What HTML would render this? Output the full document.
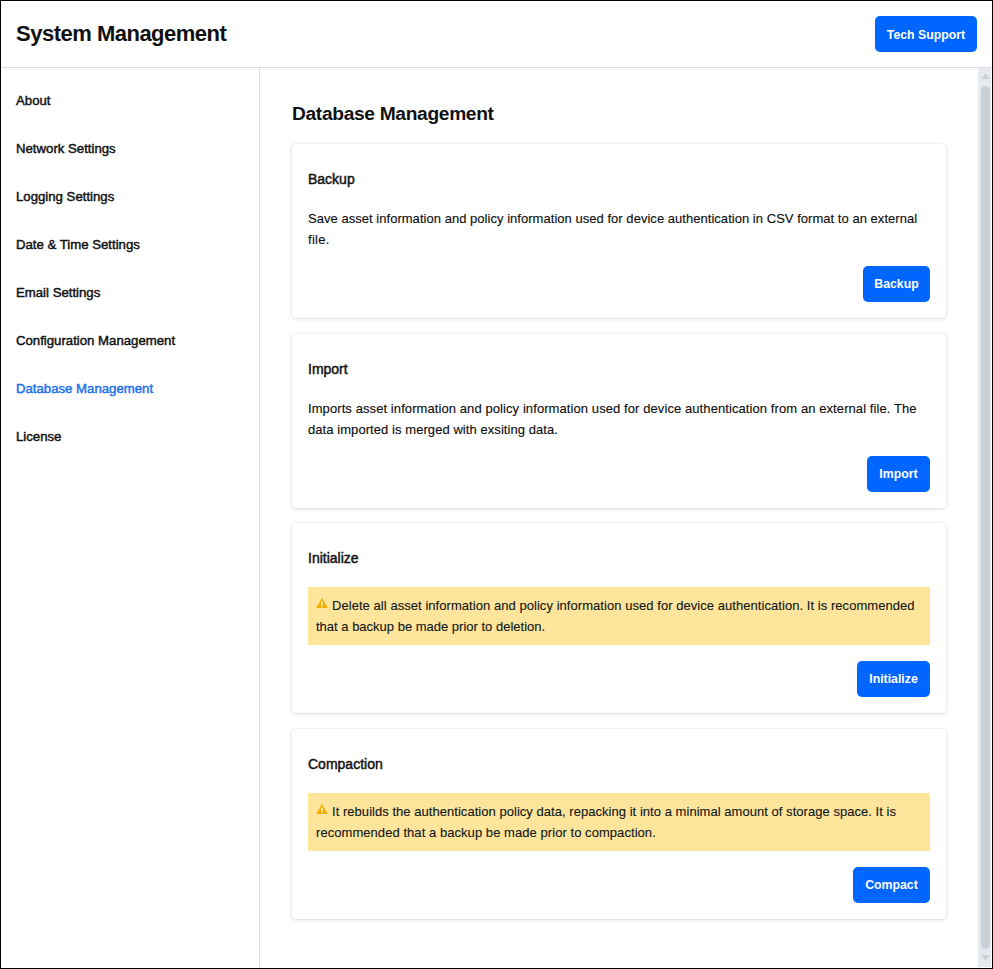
<!DOCTYPE html>
<html><head><meta charset="utf-8">
<style>
*{box-sizing:border-box;margin:0;padding:0}
html,body{width:993px;height:969px;overflow:hidden;background:#000}
body{font-family:"Liberation Sans",sans-serif;color:#212529;position:relative}
#frame{position:absolute;left:1px;top:1px;width:991px;height:967px;background:#fff;overflow:hidden}
.abs{position:absolute;white-space:nowrap}
#hdr{position:absolute;left:0;top:0;width:991px;height:67px;border-bottom:1px solid #dcdcdc}
#title{left:15px;top:21px;font-size:22px;letter-spacing:-0.5px;font-weight:bold;color:#111;line-height:24px}
.btn{position:absolute;background:#0066ff;color:#fff;font-weight:bold;font-size:12.3px;border-radius:5px;text-align:center;line-height:36px;height:36px}
#side{position:absolute;left:0;top:67px;width:259px;height:900px;border-right:1px solid #dcdcdc}
.nav{position:absolute;left:15px;font-size:13.2px;font-weight:normal;-webkit-text-stroke:0.45px currentColor;color:#111;line-height:16px;white-space:nowrap}
.nav.act{color:#1c6ff0}
#main{position:absolute;left:259px;top:67px;width:732px;height:900px}
#sb{position:absolute;left:977px;top:67px;width:13px;height:899px;background:#e6e9ed}
#h2{left:291px;top:101px;font-size:19.2px;letter-spacing:-0.33px;font-weight:bold;color:#111;line-height:24px}
.card{position:absolute;left:291px;width:654px;background:#fff;border-radius:4px;box-shadow:0 0 0 1px rgba(0,0,0,0.03),0 1px 4px rgba(0,0,0,0.12)}
.ct{position:absolute;left:16px;font-size:14px;font-weight:normal;-webkit-text-stroke:0.45px currentColor;color:#111;line-height:16px;white-space:nowrap}
.cb{position:absolute;left:16px;width:630px;white-space:nowrap;font-size:13px;line-height:21px;color:#0d0d0d;-webkit-text-stroke:0.12px #0d0d0d}
.alert{position:absolute;left:16px;width:622px;height:58px;white-space:nowrap;background:#ffe59c;padding:8px 8px 0;font-size:13px;line-height:21px;color:#10181a;-webkit-text-stroke:0.12px #10181a}
.warn{display:inline-block;width:12px;height:10px;vertical-align:2px;margin-right:4px}
</style></head><body>
<div id="frame">
  <div id="hdr">
    <div id="title" class="abs">System Management</div>
    <div class="btn" style="left:874px;top:15px;width:102px;line-height:38px">Tech Support</div>
  </div>
  <div id="side">
    <div class="nav" style="top:25px">About</div>
    <div class="nav" style="top:73px">Network Settings</div>
    <div class="nav" style="top:121px">Logging Settings</div>
    <div class="nav" style="top:169px">Date &amp; Time Settings</div>
    <div class="nav" style="top:217px">Email Settings</div>
    <div class="nav" style="top:265px">Configuration Management</div>
    <div class="nav act" style="top:313px">Database Management</div>
    <div class="nav" style="top:361px">License</div>
  </div>
  <div id="h2" class="abs">Database Management</div>

  <div class="card" style="top:143px;height:174px">
    <div class="ct" style="top:27px">Backup</div>
    <div class="cb" style="top:64px"><span style="letter-spacing:0.034px">Save asset information and policy information used for device authentication in CSV format to an external</span><br><span style="letter-spacing:0.3px">file.</span></div>
    <div class="btn" style="left:571px;top:122px;width:67px">Backup</div>
  </div>

  <div class="card" style="top:333px;height:174px">
    <div class="ct" style="top:27px">Import</div>
    <div class="cb" style="top:64px"><span style="letter-spacing:0.086px">Imports asset information and policy information used for device authentication from an external file. The</span><br><span style="letter-spacing:0.067px">data imported is merged with exsiting data.</span></div>
    <div class="btn" style="left:575px;top:122px;width:63px">Import</div>
  </div>

  <div class="card" style="top:522px;height:190px">
    <div class="ct" style="top:27px">Initialize</div>
    <div class="alert" style="top:64px"><svg class="warn" viewBox="0 0 12 10"><path d="M6 0L12 10H0Z" fill="#f0b000"/><rect x="5.35" y="3.5" width="1.3" height="3.3" fill="#fff"/><rect x="5.35" y="7.6" width="1.3" height="1.1" fill="#fff"/></svg><span style="letter-spacing:0.052px">Delete all asset information and policy information used for device authentication. It is recommended</span><br>that a backup be made prior to deletion.</div>
    <div class="btn" style="left:565px;top:138px;width:73px">Initialize</div>
  </div>

  <div class="card" style="top:728px;height:190px">
    <div class="ct" style="top:27px">Compaction</div>
    <div class="alert" style="top:64px"><svg class="warn" viewBox="0 0 12 10"><path d="M6 0L12 10H0Z" fill="#f0b000"/><rect x="5.35" y="3.5" width="1.3" height="3.3" fill="#fff"/><rect x="5.35" y="7.6" width="1.3" height="1.1" fill="#fff"/></svg><span style="letter-spacing:0.039px">It rebuilds the authentication policy data, repacking it into a minimal amount of storage space. It is</span><br><span style="letter-spacing:0.057px">recommended that a backup be made prior to compaction.</span></div>
    <div class="btn" style="left:561px;top:138px;width:77px">Compact</div>
  </div>

  <div id="sb">
    <svg style="position:absolute;left:0;top:0" width="13" height="899" viewBox="0 0 13 899">
      <path d="M3 11L7.5 5.5L12 11Z" fill="#cbd0d8"/>
      <rect x="3" y="18" width="9" height="863" rx="4.5" fill="#cbd0d8"/>
      <path d="M3 887L7.5 892.5L12 887Z" fill="#cbd0d8"/>
    </svg>
  </div>
</div>
</body></html>
